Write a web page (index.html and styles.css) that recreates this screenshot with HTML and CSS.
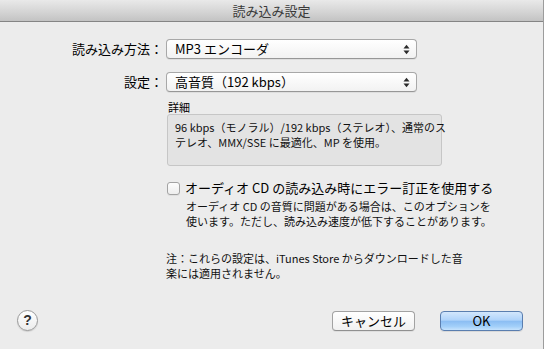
FILE: index.html
```html
<!DOCTYPE html>
<html lang="ja">
<head>
<meta charset="utf-8">
<title>読み込み設定</title>
<link rel="stylesheet" href="styles.css">
</head>
<body>
<div class="window">
  <div class="titlebar">読み込み設定</div>
  <div class="content">
    <div class="row">
      <span class="lbl">読み込み方法：</span>
      <div class="popup">
        <span class="popup-text">MP3 エンコーダ</span>
        <svg class="arrows" width="7" height="11" viewBox="0 0 7 11"><polygon points="0.5,4.5 3.5,0.8 6.5,4.5"/><polygon points="0.5,6.5 3.5,10.2 6.5,6.5"/></svg>
      </div>
    </div>
    <div class="row row2">
      <span class="lbl">設定：</span>
      <div class="popup">
        <span class="popup-text">高音質（192 kbps）</span>
        <svg class="arrows" width="7" height="11" viewBox="0 0 7 11"><polygon points="0.5,4.5 3.5,0.8 6.5,4.5"/><polygon points="0.5,6.5 3.5,10.2 6.5,6.5"/></svg>
      </div>
    </div>
    <div class="details">
      <div class="dlabel">詳細</div>
      <div class="dbox">96 kbps（モノラル）/192 kbps（ステレオ）、通常のス<br>テレオ、MMX/SSE に最適化、MP を使用。</div>
    </div>
    <div class="check">
      <span class="checkbox"></span>
      <span class="check-label">オーディオ CD の読み込み時にエラー訂正を使用する</span>
    </div>
    <div class="checkdesc">オーディオ CD の音質に問題がある場合は、このオプションを<br>使います。ただし、読み込み速度が低下することがあります。</div>
    <div class="note">注：これらの設定は、iTunes Store からダウンロードした音<br>楽には適用されません。</div>
  </div>
  <div class="footer">
    <div class="help">?</div>
    <div class="spacer"></div>
    <div class="btn cancel">キャンセル</div>
    <div class="btn ok">OK</div>
  </div>
</div>
</body>
</html>
```

FILE: styles.css
```css
html, body {
  margin: 0;
  padding: 0;
}
body {
  font-family: "Noto Sans CJK JP", sans-serif;
  color: #000;
  background: #ececec;
}
.window {
  width: 544px;
  height: 349px;
  box-sizing: border-box;
  border-right: 1px solid #9c9c9c;
  background: #ececec;
  display: flex;
  flex-direction: column;
}
.titlebar {
  height: 21px;
  line-height: 22px;
  border-bottom: 1px solid #858585;
  background: linear-gradient(#e9e9e9, #d3d3d3 60%, #c3c3c3);
  text-align: center;
  font-size: 13px;
  color: #3a3a3a;
}
.content {
  padding-top: 17px;
}
.row {
  display: flex;
  align-items: center;
  height: 20px;
}
.row2 {
  margin-top: 13px;
}
.lbl {
  width: 163px;
  text-align: right;
  font-size: 13px;
  line-height: 20px;
}
.popup {
  margin-left: 3px;
  width: 251px;
  height: 20px;
  box-sizing: border-box;
  border: 1px solid #a8a8a8;
  border-bottom-color: #979797;
  border-radius: 4px;
  background: linear-gradient(#ffffff, #f2f2f2);
  box-shadow: 0 1px 0 rgba(0,0,0,0.06);
  display: flex;
  align-items: center;
  padding-left: 8px;
  padding-right: 6px;
}
.popup-text {
  flex: 1;
  font-size: 13px;
  line-height: 18px;
}
.arrows {
  fill: #2a2a2a;
}
.details {
  margin-left: 167px;
  width: 275px;
  margin-top: 8px;
}
.dlabel {
  font-size: 11px;
  line-height: 14px;
  padding-left: 1px;
}
.dbox {
  height: 52px;
  box-sizing: border-box;
  border: 1px solid #c6c6c6;
  border-radius: 3px;
  background: #e3e3e3;
  padding: 5px 7px 0;
  font-size: 11px;
  line-height: 15px;
  white-space: nowrap;
  color: #111;
}
.check {
  margin-top: 14px;
  margin-left: 167px;
  display: flex;
  align-items: center;
  height: 16px;
}
.checkbox {
  width: 13px;
  height: 13px;
  box-sizing: border-box;
  border: 1px solid #a3a3a3;
  border-radius: 3px;
  background: linear-gradient(#fdfdfd, #eeeeee);
  box-shadow: 0 1px 0 rgba(0,0,0,0.05);
}
.check-label {
  margin-left: 5px;
  font-size: 13px;
  line-height: 16px;
  white-space: nowrap;
}
.checkdesc {
  margin-top: 3px;
  margin-left: 186px;
  font-size: 11px;
  line-height: 15px;
  white-space: nowrap;
  color: #111;
}
.note {
  margin-top: 22px;
  margin-left: 166px;
  font-size: 11px;
  line-height: 15px;
  white-space: nowrap;
  color: #111;
}
.footer {
  margin-top: auto;
  display: flex;
  align-items: center;
  height: 21px;
  padding: 0 20px 18px 17px;
}
.spacer {
  flex: 1;
}
.help {
  width: 21px;
  height: 21px;
  box-sizing: border-box;
  border-radius: 50%;
  border: 1px solid #999;
  background: linear-gradient(#ffffff, #ececec);
  box-shadow: 0 1px 1px rgba(0,0,0,0.12);
  text-align: center;
  font-family: "Liberation Sans", sans-serif;
  font-weight: bold;
  font-size: 14px;
  line-height: 19px;
  color: #333;
}
.btn {
  width: 83px;
  height: 20px;
  box-sizing: border-box;
  border-radius: 4px;
  text-align: center;
  font-size: 13px;
  line-height: 18px;
}
.cancel {
  border: 1px solid #a2a2a2;
  border-bottom-color: #909090;
  background: linear-gradient(#ffffff, #f1f1f1);
  box-shadow: 0 1px 0 rgba(0,0,0,0.06);
  margin-right: 25px;
}
.ok {
  border: 1px solid #5a7eaf;
  background: linear-gradient(#d3e7fc 0%, #afd3fa 45%, #8cbef3 52%, #a2cff9 80%, #c6e3fd 100%);
  box-shadow: 0 1px 0 rgba(0,0,0,0.08);
}
```
